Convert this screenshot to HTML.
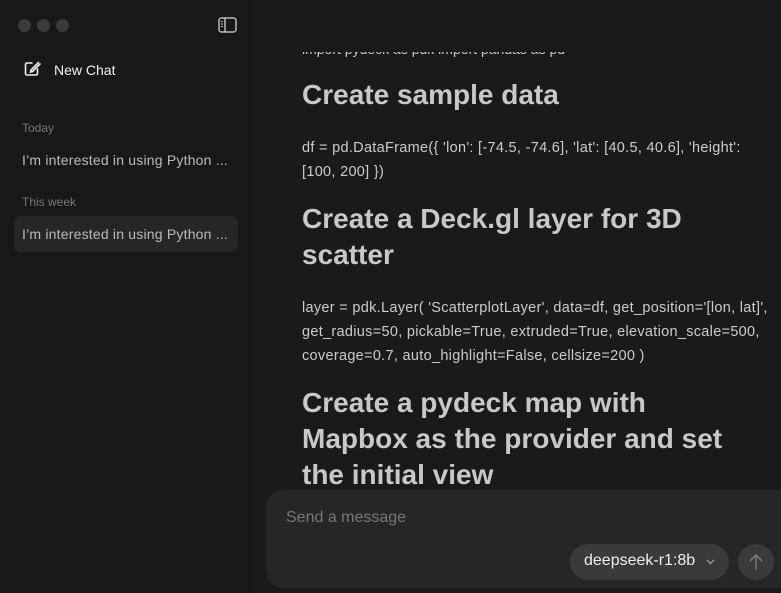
<!DOCTYPE html>
<html><head><style>
*{margin:0;padding:0;box-sizing:border-box}
body{width:781px;height:593px;background:#1a1a1a;font-family:"Liberation Sans",sans-serif;overflow:hidden;position:relative;color:#ccc}
.side{position:absolute;left:0;top:0;width:252px;height:593px;background:#181818}
.dot{position:absolute;top:19px;width:13px;height:13px;border-radius:50%;background:#3a3a3a}
.lbl{position:absolute;left:22px;font-size:12px;color:#777}
.item{position:absolute;left:14px;width:224px;height:36px;border-radius:7px;padding:10px 8px;font-size:14px;letter-spacing:0.2px;color:#bbb;white-space:nowrap}
.main{position:absolute;left:302px;top:0;width:479px;height:490px;overflow:hidden}
.clip{position:absolute;left:0;top:41px;font-size:14px;color:#ccc;clip-path:inset(11px 0 0 0)}
h2{position:absolute;left:0;font-size:28px;line-height:36px;font-weight:bold;color:#c8c8c8}
p{position:absolute;left:0;font-size:14.5px;letter-spacing:0.3px;line-height:24px;color:#ccc;width:486px}
.input{position:absolute;left:266px;top:490px;width:530px;height:98px;background:#262626;border-radius:18px}
</style></head><body>
<div class="side">
<div class="dot" style="left:18px"></div><div class="dot" style="left:37px"></div><div class="dot" style="left:56px"></div>
<svg style="position:absolute;left:218px;top:17px" width="19" height="16" viewBox="0 0 19 16"><rect x="1" y="1" width="17" height="14" rx="2.5" fill="none" stroke="#bbb" stroke-width="1.5"/><line x1="7" y1="1" x2="7" y2="15" stroke="#bbb" stroke-width="1.5"/><line x1="3" y1="4.5" x2="5" y2="4.5" stroke="#bbb"/><line x1="3" y1="7" x2="5" y2="7" stroke="#bbb"/><line x1="3" y1="9.5" x2="5" y2="9.5" stroke="#bbb"/></svg>
<svg style="position:absolute;left:23px;top:60px" width="18" height="18" viewBox="0 0 18 18"><path d="M9 3H4a1.5 1.5 0 0 0-1.5 1.5v9A1.5 1.5 0 0 0 4 15h9a1.5 1.5 0 0 0 1.5-1.5V9" fill="none" stroke="#eee" stroke-width="1.6" stroke-linecap="round"/><path d="M15.5 2.5L8 10l-.5 2 2-.5 7.5-7.5" fill="none" stroke="#eee" stroke-width="1.6" stroke-linecap="round"/></svg>
<div style="position:absolute;left:54px;top:62px;font-size:14px;color:#f0f0f0">New Chat</div>
<div class="lbl" style="top:121px">Today</div>
<div class="item" style="top:142px">I’m interested in using Python ...</div>
<div class="lbl" style="top:195px">This week</div>
<div class="item" style="top:216px;background:#262626">I’m interested in using Python ...</div>
</div>
<div class="main">
<div class="clip">import pydeck as pdk import pandas as pd</div>
<h2 style="top:77px">Create sample data</h2>
<p style="top:136px">df = pd.DataFrame({ 'lon': [-74.5, -74.6], 'lat': [40.5, 40.6], 'height':<br>[100, 200] })</p>
<h2 style="top:201px">Create a Deck.gl layer for 3D scatter</h2>
<p style="top:296px">layer = pdk.Layer( 'ScatterplotLayer', data=df, get_position='[lon, lat]',<br>get_radius=50, pickable=True, extruded=True, elevation_scale=500,<br>coverage=0.7, auto_highlight=False, cellsize=200 )</p>
<h2 style="top:385px;width:440px">Create a pydeck map with Mapbox as the provider and set the initial view</h2>
</div>
<div class="input">
<div style="position:absolute;left:20px;top:19px;font-size:16px;color:#777">Send a message</div>
<div style="position:absolute;left:304px;top:54px;width:159px;height:36px;border-radius:18px;background:#3a3a3a;font-size:16px;color:#eee;padding:8px 14px;white-space:nowrap">deepseek-r1:8b<svg style="position:absolute;left:136px;top:15px" width="9" height="6" viewBox="0 0 9 6"><path d="M1 1l3.5 3.5L8 1" fill="none" stroke="#aaa" stroke-width="1.2"/></svg></div>
<div style="position:absolute;left:472px;top:54px;width:36px;height:36px;border-radius:50%;background:#3a3a3a"><svg width="36" height="36" viewBox="0 0 36 36"><path d="M18 25V11M12.5 16.5L18 11l5.5 5.5" fill="none" stroke="#777" stroke-width="1.6" stroke-linecap="round"/></svg></div>
</div>
</body></html>
